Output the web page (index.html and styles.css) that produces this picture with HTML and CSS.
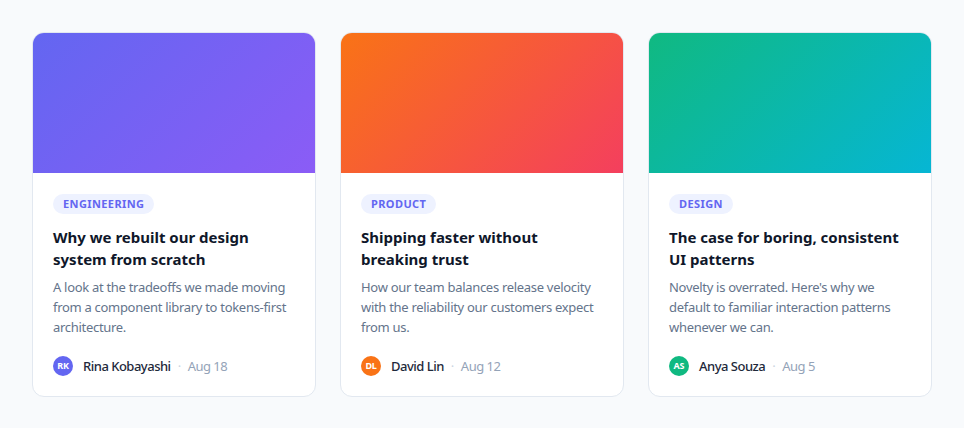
FILE: index.html
```html
<!DOCTYPE html>
<html lang="en">
<head>
<meta charset="utf-8">
<title>Articles</title>
<link rel="stylesheet" href="styles.css">
</head>
<body>
<main class="grid">
  <article class="card">
    <div class="cover cover-indigo"></div>
    <div class="body">
      <span class="tag">Engineering</span>
      <h2 class="title">Why we rebuilt our design system from scratch</h2>
      <p class="desc">A look at the tradeoffs we made moving from a component library to tokens-first architecture.</p>
      <div class="meta">
        <span class="avatar av-indigo">RK</span>
        <span class="name">Rina Kobayashi</span>
        <span class="dot">·</span>
        <span class="date">Aug 18</span>
      </div>
    </div>
  </article>
  <article class="card">
    <div class="cover cover-orange"></div>
    <div class="body">
      <span class="tag">Product</span>
      <h2 class="title">Shipping faster without breaking trust</h2>
      <p class="desc">How our team balances release velocity with the reliability our customers expect from us.</p>
      <div class="meta">
        <span class="avatar av-orange">DL</span>
        <span class="name">David Lin</span>
        <span class="dot">·</span>
        <span class="date">Aug 12</span>
      </div>
    </div>
  </article>
  <article class="card">
    <div class="cover cover-green"></div>
    <div class="body">
      <span class="tag">Design</span>
      <h2 class="title">The case for boring, consistent UI patterns</h2>
      <p class="desc">Novelty is overrated. Here's why we default to familiar interaction patterns whenever we can.</p>
      <div class="meta">
        <span class="avatar av-green">AS</span>
        <span class="name">Anya Souza</span>
        <span class="dot">·</span>
        <span class="date">Aug 5</span>
      </div>
    </div>
  </article>
</main>
</body>
</html>
```
FILE: styles.css
```css
* { box-sizing: border-box; }
html, body { margin: 0; padding: 0; }
body {
  background: #f8fafc;
  font-family: "Noto Sans", "Open Sans", sans-serif;
  color: #0f172a;
}
.grid {
  display: grid;
  grid-template-columns: repeat(3, 1fr);
  gap: 24px;
  padding: 32px;
}
.card {
  background: #ffffff;
  border: 1px solid #e2e8f0;
  border-radius: 12px;
  overflow: hidden;
  display: flex;
  flex-direction: column;
}
.cover { height: 140px; }
.cover-indigo { background: linear-gradient(135deg, #6366f1, #8b5cf6); }
.cover-orange { background: linear-gradient(135deg, #f97316, #f43f5e); }
.cover-green { background: linear-gradient(135deg, #10b981, #06b6d4); }
.body {
  padding: 21px 20px 20px 20px;
  display: flex;
  flex-direction: column;
  align-items: flex-start;
}
.tag {
  display: inline-block;
  background: #eef2ff;
  color: #6366f1;
  font-size: 11px;
  font-weight: 700;
  text-transform: uppercase;
  letter-spacing: 0.4px;
  line-height: 20px;
  padding: 0 10px;
  border-radius: 999px;
}
.title {
  margin: 12px 0 0;
  font-size: 15px;
  font-weight: 700;
  line-height: 22px;
  color: #0f172a;
}
.desc {
  margin: 7px 0 0;
  font-size: 13px;
  line-height: 20px;
  letter-spacing: -0.3px;
  color: #64748b;
}
.meta {
  margin-top: 18px;
  height: 21px;
  display: flex;
  align-items: center;
  font-size: 13px;
  letter-spacing: -0.5px;
}
.avatar {
  width: 20px;
  height: 20px;
  border-radius: 50%;
  color: #fff;
  font-size: 9px;
  font-weight: 700;
  letter-spacing: -0.2px;
  display: flex;
  align-items: center;
  justify-content: center;
  margin-right: 10px;
}
.av-indigo { background: #6366f1; }
.av-orange { background: #f97316; }
.av-green { background: #10b981; }
.name { color: #1e293b; font-weight: 500; }
.dot { color: #cbd5e1; margin: 0 7px; }
.date { color: #94a3b8; }
```
